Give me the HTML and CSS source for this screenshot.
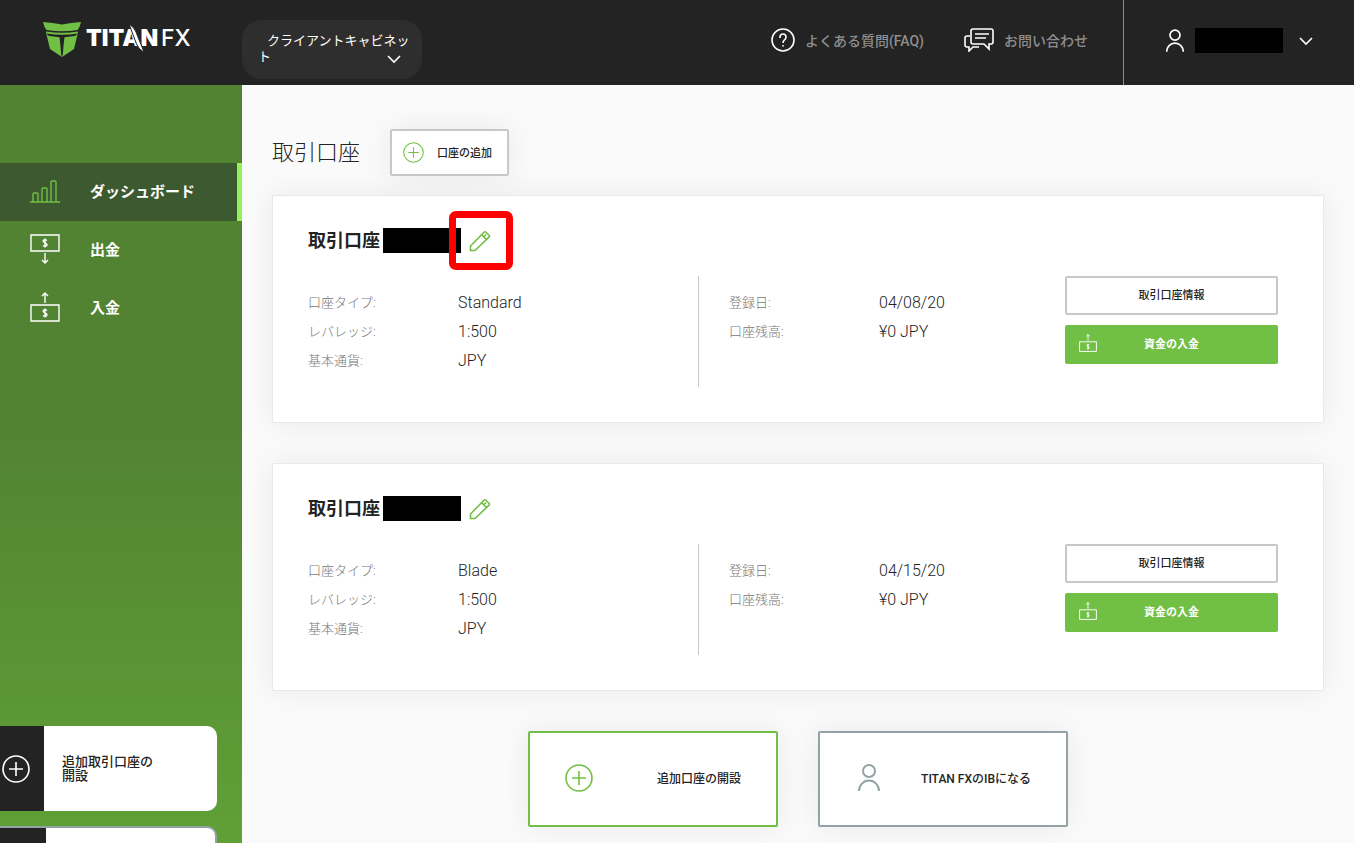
FILE: index.html
```html
<!DOCTYPE html>
<html lang="ja">
<head>
<meta charset="utf-8">
<title>Titan FX</title>
<link rel="stylesheet" href="styles.css">
</head>
<body>
<svg class="sprite" aria-hidden="true">
  <symbol id="plus" viewBox="0 0 28 28"><circle cx="14" cy="14" r="13"/><path d="M14 7v14M7 14h14"/></symbol>
  <symbol id="person" viewBox="0 0 24 28"><circle cx="12" cy="7" r="6"/><path d="M2 27a10 10.500 0 0 1 20 0"/></symbol>
  <symbol id="chevron" viewBox="0 0 14 10"><path d="M1 2l6 6 6-6"/></symbol>
  <symbol id="pencil" viewBox="0 0 22 22"><path d="M1.500 20.500v-4.500L15 2.200q1-1 2 0l3 3q1 1 0 2L6 20.500zM12.700 4.800l4.800 4.800M14.800 6.800l2.200-2.300"/></symbol>
  <symbol id="bill-up" viewBox="0 0 30 30"><path d="M1 13h28v16H1zM15 11V1M12 4l3-3 3 3M17 18.500q-2-1.500-3.500-.3-1 1.500 1.500 2.800 2.700 1 1.700 2.600-1.500 1.300-3.700 0M15 16.500v9"/></symbol>
  <symbol id="bill-down" viewBox="0 0 30 30"><path d="M1 1h28v16H1zM15 19v10M12 26l3 3 3-3M17 6.500q-2-1.500-3.500-.3-1 1.500 1.500 2.800 2.700 1 1.700 2.600-1.500 1.300-3.700 0M15 4.500v9"/></symbol>
</svg>

<header class="header">
  <a class="logo" href="#" aria-label="TITAN FX">
    <svg width="152" height="36" viewBox="0 0 152 36">
      <path fill="#71bf44" d="M0 0q10 .5 19 2.500Q28 .5 38 0q-1 5-3.500 8-15.500 2.500-31 0Q1 5 0 0z"/>
      <path fill="#71bf44" d="M3 9.500q16 2.500 32 0-.2 3-1 5L31 27q-6 4-12 8-6-4-12-8L4 14.500q-.8-2-1-5z"/>
      <path fill="#232323" d="M3.500 11.500q15.500 2.600 31 0-1 2.200-3 2.500l-10 1.200q-1 8-1.700 17.300L19 35l-.8-2.500q-.7-9.300-1.700-17.300L6.500 14q-2-.3-3-2.500z"/>
      <text class="logo-bold" x="43" y="24">TITAN</text>
      <path fill="#fff" stroke="#232323" stroke-width="1" d="M86 2q5 3 7 8l8 20q-5-2-7.500-8z"/>
      <text class="logo-thin" x="118" y="24">FX</text>
    </svg>
  </a>
  <button class="cabinet" type="button">クライアントキャビネット<svg class="cabinet-arrow"><use href="#chevron"/></svg></button>
  <nav class="help">
    <a href="#"><svg width="24" height="24" viewBox="0 0 24 24"><circle cx="12" cy="12" r="11"/><path d="M9 10V9a3 3 0 0 1 6 0q0 1.800-1.500 2.800Q12 13 12 15M12 17v1.500"/></svg>よくある質問(FAQ)</a>
    <a href="#"><svg width="30" height="24" viewBox="0 0 30 24"><path d="M9 1h18q2 0 2 2v11q0 2-2 2h-2v5l-5-5H9q-2 0-2-2V3q0-2 2-2zM11 6h14M11 10h11M6 8H3Q1 8 1 10v7q0 2 2 2h2v4l4-4h6"/></svg>お問い合わせ</a>
  </nav>
  <button class="account" type="button" aria-label="アカウント">
    <svg class="account-icon"><use href="#person"/></svg>
    <span class="account-name"></span>
    <svg class="arrow"><use href="#chevron"/></svg>
  </button>
</header>

<div class="body">
  <aside class="sidebar">
    <nav>
      <a class="nav-item active" href="#"><svg viewBox="0 0 30 24"><path d="M0 23h30M3 23v-8q0-1 1-1h3q1 0 1 1v8M12 23V10q0-1 1-1h3q1 0 1 1v13M21 23V3q0-1 1-1h3q1 0 1 1v20"/></svg>ダッシュボード</a>
      <a class="nav-item" href="#"><svg><use href="#bill-down"/></svg>出金</a>
      <a class="nav-item" href="#"><svg><use href="#bill-up"/></svg>入金</a>
    </nav>
    <div class="promos">
      <a class="promo" href="#"><span class="promo-icon"><svg><use href="#plus"/></svg></span><span class="promo-text">追加取引口座の<br>開設</span></a>
      <div class="promo outlined"><span class="promo-icon"></span></div>
    </div>
  </aside>

  <main class="main">
    <div class="page-head">
      <h1>取引口座</h1>
      <button class="add" type="button"><svg><use href="#plus"/></svg>口座の追加</button>
    </div>

    <section class="card">
      <div class="card-head"><h2>取引口座</h2><span class="number"></span>
        <button class="edit marked" type="button" aria-label="編集"><svg><use href="#pencil"/></svg></button></div>
      <div class="card-body">
        <dl class="divided"><dt>口座タイプ:</dt><dd>Standard</dd><dt>レバレッジ:</dt><dd>1:500</dd><dt>基本通貨:</dt><dd>JPY</dd></dl>
        <dl><dt>登録日:</dt><dd>04/08/20</dd><dt>口座残高:</dt><dd>¥0 JPY</dd></dl>
        <div class="actions"><button class="info" type="button">取引口座情報</button><button class="fund" type="button"><svg><use href="#bill-up"/></svg>資金の入金</button></div>
      </div>
    </section>

    <section class="card">
      <div class="card-head"><h2>取引口座</h2><span class="number"></span>
        <button class="edit" type="button" aria-label="編集"><svg><use href="#pencil"/></svg></button></div>
      <div class="card-body">
        <dl class="divided"><dt>口座タイプ:</dt><dd>Blade</dd><dt>レバレッジ:</dt><dd>1:500</dd><dt>基本通貨:</dt><dd>JPY</dd></dl>
        <dl><dt>登録日:</dt><dd>04/15/20</dd><dt>口座残高:</dt><dd>¥0 JPY</dd></dl>
        <div class="actions"><button class="info" type="button">取引口座情報</button><button class="fund" type="button"><svg><use href="#bill-up"/></svg>資金の入金</button></div>
      </div>
    </section>

    <div class="links">
      <a class="tile green" href="#"><svg><use href="#plus"/></svg>追加口座の開設</a>
      <a class="tile grey" href="#"><svg><use href="#person"/></svg>TITAN FXのIBになる</a>
    </div>
  </main>
</div>
</body>
</html>
```
FILE: styles.css
```css
* { box-sizing: border-box; }
body {
  margin: 0;
  min-height: 100vh;
  display: flex;
  flex-direction: column;
  background: #fafafa;
  color: #232323;
  font-family: Roboto, "Noto Sans CJK JP", sans-serif;
  font-size: 13px;
}
a { color: inherit; text-decoration: none; }
button { font: inherit; color: inherit; border: 0; padding: 0; background: none; cursor: pointer; }
svg { fill: none; stroke: currentColor; stroke-width: 2; flex: none; display: block; }
.sprite { position: absolute; width: 0; height: 0; }

.header { display: flex; height: 85px; background: #232323; color: #fff; }
.logo { width: 242px; padding: 22px 0 0 43px; }
.logo svg { stroke: none; }
.logo text { font-family: Inter, sans-serif; font-size: 23px; fill: #fff; }
.logo .logo-bold { font-weight: 900; }
.logo .logo-thin { font-weight: 500; }
.cabinet {
  position: relative;
  width: 180px;
  height: 59px;
  margin-top: 20px;
  padding: 0 8px 2px 16px;
  border-radius: 20px;
  background: #2e2e2e;
  text-align: left;
  text-indent: 9px;
  line-height: 16px;
  word-break: break-all;
}
.cabinet-arrow { position: absolute; right: 21px; bottom: 15px; width: 14px; height: 10px; stroke-width: 1.6; }
.arrow { width: 14px; height: 10px; stroke-width: 1.6; }
.help { display: flex; gap: 40px; margin-left: auto; padding: 0 35px 5px 0; color: #8e8e8e; font-size: 14px; font-weight: 500; }
.help a { display: flex; align-items: center; gap: 10px; }
.help svg { color: #fff; stroke-width: 1.6; }
.account { display: flex; align-items: center; width: 231px; padding: 0 41px 4px 41px; border-left: 1px solid #8e8e8e; }
.account-icon { width: 20px; height: 24px; }
.account-name { flex: 1; height: 25px; margin: 0 16px 0 10px; background: #000; }

.body { flex: 1; display: flex; }
.sidebar {
  width: 242px;
  flex: none;
  display: flex;
  flex-direction: column;
  overflow: hidden;
  padding-top: 78px;
  background: linear-gradient(#528332 45%, #60a036);
}
.nav-item { display: flex; align-items: center; gap: 30px; height: 58px; padding: 0 0 3px 30px; color: #fff; font-size: 15px; font-weight: 700; }
.nav-item svg { width: 30px; height: 30px; stroke-width: 1.4; }
.active { background: #3d5930; border-right: 5px solid #93f15b; }
.active svg { color: #71bf44; }
.promos { margin: auto 0 -68px; }
.promo { display: flex; width: 217px; height: 85px; margin-bottom: 15px; border-radius: 0 10px 10px 0; background: #fff; overflow: hidden; font-weight: 500; line-height: 14px; }
.promo-icon { display: flex; align-items: center; width: 44px; padding-left: 2px; background: #232323; color: #fff; }
.promo-icon svg { width: 28px; height: 28px; stroke-width: 1.6; }
.promo-text { align-self: center; padding-left: 18px; }
.outlined { margin-bottom: 0; border: 2px solid #93a3a5; border-left: 0; }
.outlined .promo-icon { width: 46px; }

.main { flex: 1; padding: 44px 30px 16px; }
.page-head { display: flex; align-items: center; gap: 30px; margin-bottom: 19px; }
h1 { margin: 0; font-size: 22px; line-height: 32px; font-weight: 300; }
.add { display: flex; align-items: center; gap: 13px; height: 47px; padding: 0 15px 1px 11px; border: 2px solid #c8c8c8; border-radius: 2px; background: #fff; box-shadow: 0 0 30px rgba(0, 0, 0, .07); font-size: 11px; font-weight: 500; }
.add svg { width: 21px; height: 21px; color: #71bf44; stroke-width: 1.4; }

.card { margin-bottom: 40px; padding: 32px 45px 35px 35px; border: 1px solid #e8e8e8; border-radius: 2px; background: #fff; box-shadow: 0 0 30px rgba(0, 0, 0, .07); }
.card-head { display: flex; align-items: center; height: 25px; margin-bottom: 23px; }
h2 { margin: 0; font-size: 18px; line-height: 25px; font-weight: 700; }
.number { width: 78px; height: 25px; margin: 0 8px 0 3px; background: #000; }
.edit { position: relative; color: #71bf44; }
.edit svg { width: 22px; height: 22px; stroke-width: 1.6; }
.marked::after { content: ""; position: absolute; inset: -19px -22px -18px -20px; border: 7px solid #f00; border-radius: 7px; }
.card-body { display: grid; grid-template-columns: 391fr 366fr 213px; }
dl { display: grid; grid-template-columns: 150px 1fr; align-content: start; height: 111px; margin: 0; padding: 12px 0; font-weight: 300; line-height: 29px; }
.divided { border-right: 1px solid #c8c8c8; }
.divided + dl { padding-left: 30px; }
dt { color: #777; }
dd { margin: 0; font-size: 16px; }
.actions { display: flex; flex-direction: column; gap: 10px; font-size: 11px; }
.actions button { height: 39px; padding-bottom: 3px; border-radius: 2px; }
.info { border: 2px solid #c8c8c8; font-weight: 500; }
.actions .fund { display: grid; grid-template-columns: 18px 1fr 18px; align-items: center; padding: 0 14px 3px; background: #71bf44; color: #fff; font-weight: 700; }
.fund svg { width: 18px; height: 18px; stroke-width: 1.6; }

.links { display: flex; justify-content: center; gap: 40px; }
.tile { display: flex; align-items: center; justify-content: space-between; width: 250px; height: 96px; padding: 0 35px 3px; border: 2px solid; border-radius: 2px; background: #fff; box-shadow: 0 0 30px rgba(0, 0, 0, .07); font-size: 12px; font-weight: 500; }
.tile svg { width: 28px; height: 28px; }
.green { border-color: #71bf44; }
.green svg { color: #71bf44; stroke-width: 1.6; }
.grey { border-color: #93a3a5; }
.grey svg { color: #93a3a5; }
```
